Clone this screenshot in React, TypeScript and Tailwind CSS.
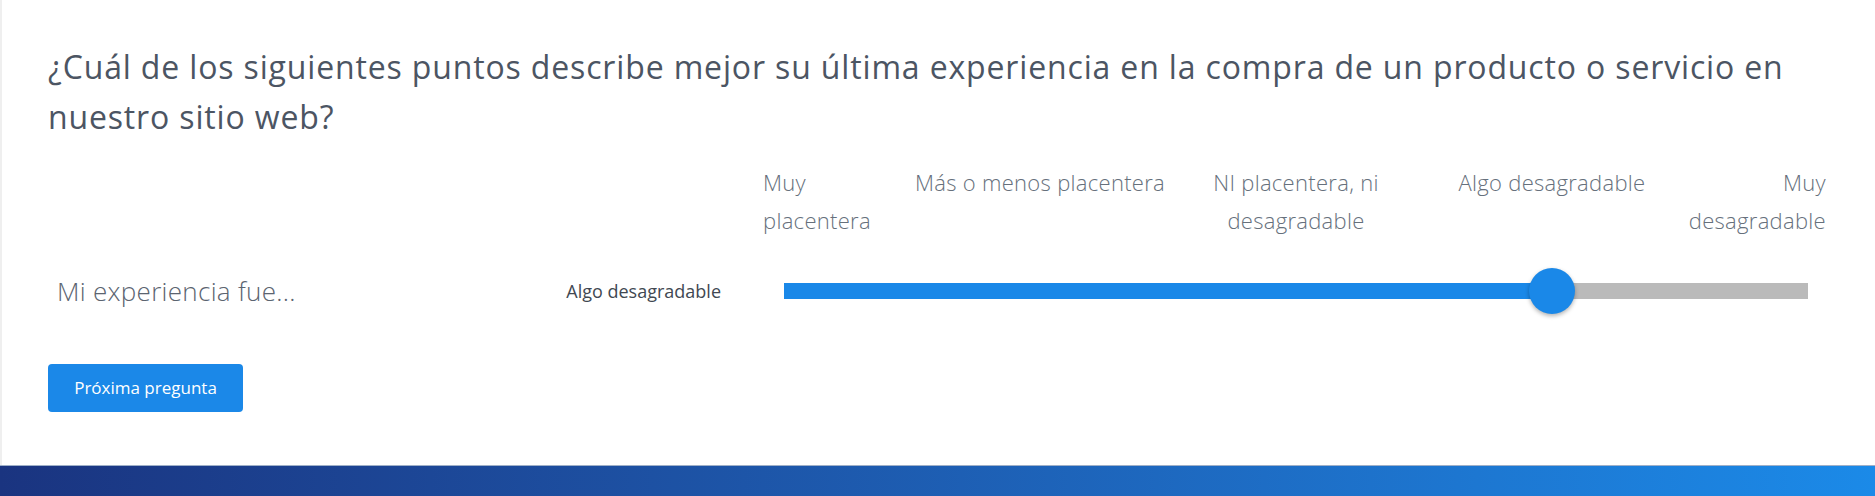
import { useState } from "react";

const scaleLabels = [
  { text: "Muy placentera", align: "text-left pr-[30px]" },
  { text: "Más o menos placentera", align: "text-center" },
  { text: "NI placentera, ni desagradable", align: "text-center" },
  { text: "Algo desagradable", align: "text-center" },
  { text: "Muy desagradable", align: "text-right" },
];

const SurveyQuestion = () => {
  const [value] = useState(3);
  const pct = (value / (scaleLabels.length - 1)) * 100;

  return (
    <div className="h-screen min-h-[496px] flex flex-col bg-white font-['Open_Sans',sans-serif]">
      <div className="flex-1 border-l-2 border-[#efefef] pl-[46px] pr-[49px] pt-[42px]">
        {/* Question */}
        <h2 className="text-[32px] leading-[50px] tracking-[0.85px] text-[#4c5563]">
          ¿Cuál de los siguientes puntos describe mejor su última experiencia en la compra de un producto o servicio en nuestro sitio web?
        </h2>

        {/* Scale labels */}
        <div className="grid grid-cols-[673px_1fr] gap-x-[42px] mt-[21px]">
          <div />
          <div className="grid grid-cols-[149px_256px_256px_256px_146px] text-[22px] leading-[38px] tracking-[0.3px] font-light text-[#66707c]">
            {scaleLabels.map((label) => (
              <div key={label.text} className={label.align}>
                {label.text}
              </div>
            ))}
          </div>
        </div>

        {/* Slider row */}
        <div className="grid grid-cols-[673px_1fr] gap-x-[42px] mt-[29px] h-[46px] items-center">
          <div className="flex items-center justify-between">
            <span className="pl-[9px] text-[26px] tracking-[0.3px] font-light text-[#5b6470]">Mi experiencia fue...</span>
            <span className="text-[18px] text-[#414852]">{scaleLabels[value].text}</span>
          </div>
          <div className="pl-[21px] pr-[18px]">
            <div className="relative h-4 bg-[#bababa]">
              <div className="h-full bg-[#1a88e8]" style={{ width: `${pct}%` }} />
              <div
                className="absolute top-1/2 w-[46px] h-[46px] -translate-x-1/2 -translate-y-1/2 rounded-full bg-[#1a88e8] shadow-[0_2px_4px_rgba(0,0,0,0.3)]"
                style={{ left: `${pct}%` }}
              />
            </div>
          </div>
        </div>

        <button className="mt-[50px] w-[195px] h-[48px] rounded bg-[#1b88e8] text-white text-[17px] font-medium">
          Próxima pregunta
        </button>
      </div>

      {/* Footer band */}
      <div className="h-[31px] border-t border-[#9fb0c8] bg-linear-to-r from-[#1a3480] to-[#1b8ae8]" />
    </div>
  );
};

export default SurveyQuestion;
